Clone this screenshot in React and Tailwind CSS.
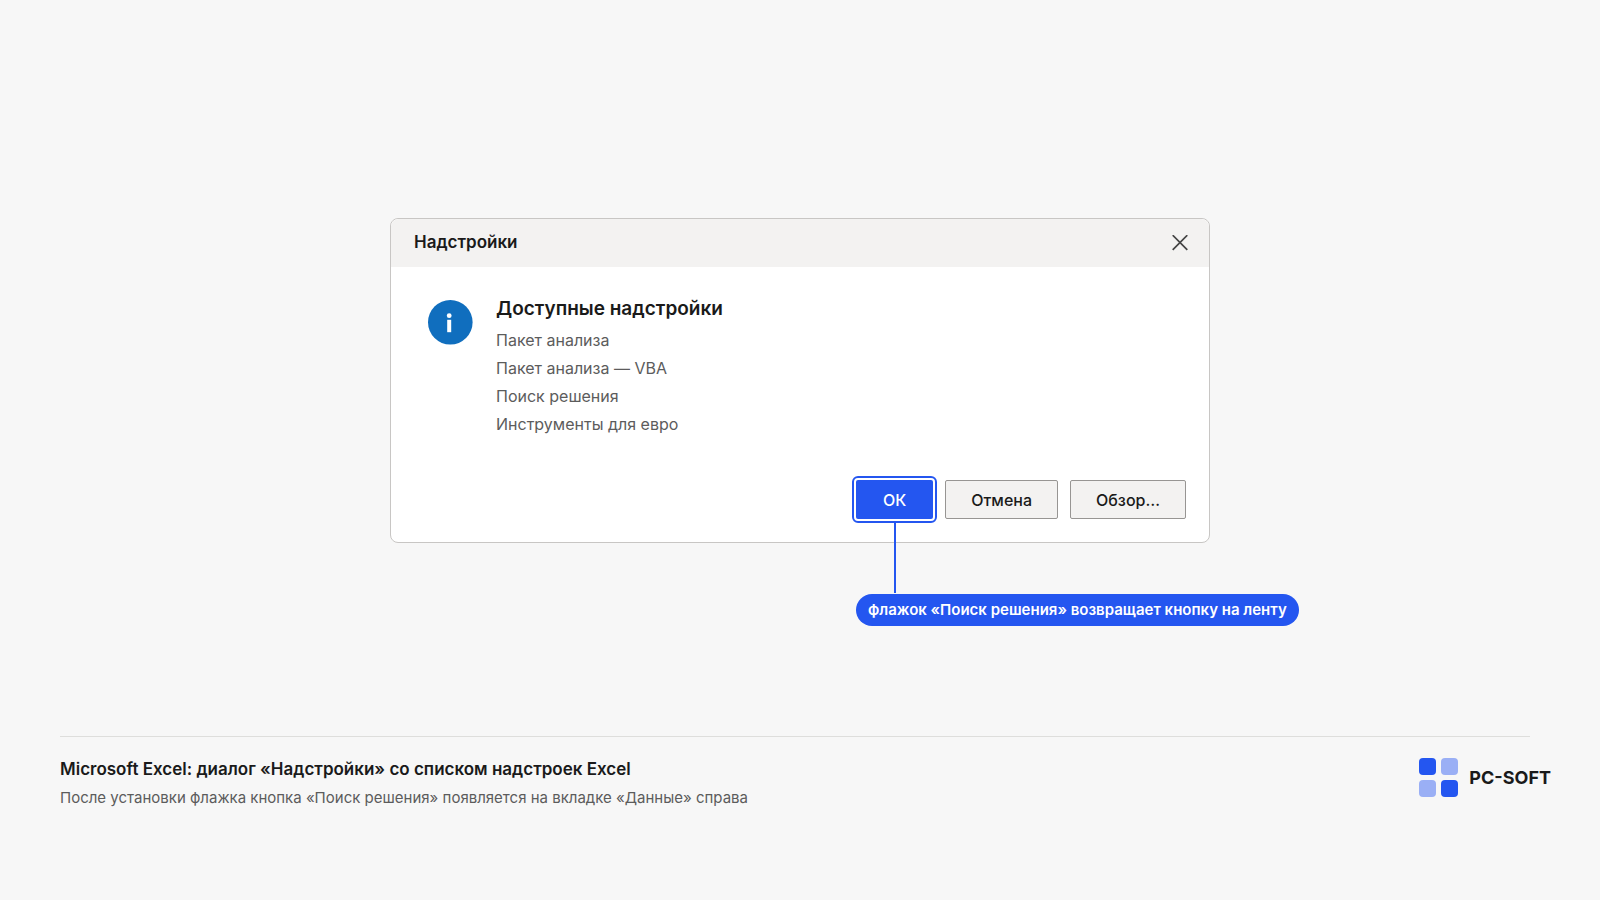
import React from 'react';

const ADDINS = ['Пакет анализа', 'Пакет анализа — VBA', 'Поиск решения', 'Инструменты для евро'];

function InfoIcon() {
  return (
    <svg className="w-[45px] h-[45px] shrink-0" viewBox="0 0 45 45" aria-hidden="true">
      <circle cx="22.3" cy="22.3" r="22.3" fill="#106ebe" />
      <circle cx="21.2" cy="15.7" r="2.4" fill="#fff" />
      <rect x="19.2" y="19.8" width="4" height="12.4" fill="#fff" />
    </svg>
  );
}

function Logo() {
  return (
    <svg className="w-[39px] h-[39px] shrink-0" viewBox="0 0 39 39" aria-hidden="true">
      <rect width="17" height="17" rx="4" fill="#2456f0" />
      <rect x="22" width="17" height="17" rx="4" fill="#9aaff5" />
      <rect y="22" width="17" height="17" rx="4" fill="#9aaff5" />
      <rect x="22" y="22" width="17" height="17" rx="4" fill="#2456f0" />
    </svg>
  );
}

function DialogButton({ children }) {
  return (
    <button
      type="button"
      className="h-[39px] px-[25px] rounded-xs border border-[#979593] bg-[#f3f2f1] text-base font-medium text-[#1a1a1a]"
    >
      {children}
    </button>
  );
}

function AddinsDialog() {
  return (
    <section
      role="dialog"
      aria-labelledby="dialog-title"
      className="w-[820px] max-w-full rounded-lg border border-[#c8c6c4] bg-white"
    >
      <header className="flex items-center justify-between h-12 pl-[23px] pr-[19px] rounded-t-lg bg-[#f3f2f1]">
        <h1 id="dialog-title" className="text-[17px] font-semibold">Надстройки</h1>
        <button type="button" aria-label="Закрыть" className="p-0.5">
          <svg className="w-4 h-4" viewBox="0 0 16 16" fill="none" stroke="#444" strokeWidth="1.7">
            <path d="M0.7 0.2 15.3 14.8M15.3 0.2 0.7 14.8" />
          </svg>
        </button>
      </header>

      {/* List of add-ins */}
      <div className="flex gap-[23px] pt-7 pl-[37px] pr-6">
        <div className="pt-[5px]">
          <InfoIcon />
        </div>
        <div>
          <h2 className="text-[19px] leading-7 font-semibold">Доступные надстройки</h2>
          <ul className="mt-[3px] text-base leading-7 text-[#5c5c5c]">
            {ADDINS.map(a => <li key={a}>{a}</li>)}
          </ul>
        </div>
      </div>

      {/* Buttons, with the callout hanging off OK */}
      <div className="flex justify-end gap-3 mt-[42px] pr-[23px] pb-[23px]">
        <div className="relative">
          <button
            type="button"
            className="h-[39px] px-[27px] rounded-xs bg-[#2456f0] text-base font-medium text-white outline-2 outline-offset-2 outline-[#2456f0]"
          >
            ОК
          </button>
          <div className="absolute top-[43px] left-1/2 -translate-x-1/2 w-0.5 h-[70px] bg-[#2456f0]" />
          <p className="absolute top-[114px] left-0 h-8 px-3 rounded-full bg-[#2456f0] text-[15px] leading-8 font-semibold text-white whitespace-nowrap">
            флажок «Поиск решения» возвращает кнопку на ленту
          </p>
        </div>
        <DialogButton>Отмена</DialogButton>
        <DialogButton>Обзор…</DialogButton>
      </div>
    </section>
  );
}

export default function App() {
  return (
    <div className="min-h-screen bg-[#f7f7f7] text-[#1a1a1a] font-['Inter',sans-serif]">
      <main className="flex justify-center pt-[218px] pb-[193px]">
        <AddinsDialog />
      </main>

      <footer>
        <hr className="ml-[60px] mr-[70px] border-[#dededc]" />
        <div className="flex items-start justify-between pt-[21px] pl-[60px] pr-[49px]">
          <div>
            <h2 className="text-[17px] leading-[22px] font-semibold">
              Microsoft Excel: диалог «Надстройки» со списком надстроек Excel
            </h2>
            <p className="mt-1.5 text-[15px] leading-6 text-[#5c5c5c]">
              После установки флажка кнопка «Поиск решения» появляется на вкладке «Данные» справа
            </p>
          </div>
          <div className="flex items-center gap-[11px]">
            <Logo />
            <span className="text-lg font-bold">PC-SOFT</span>
          </div>
        </div>
      </footer>
    </div>
  );
}
